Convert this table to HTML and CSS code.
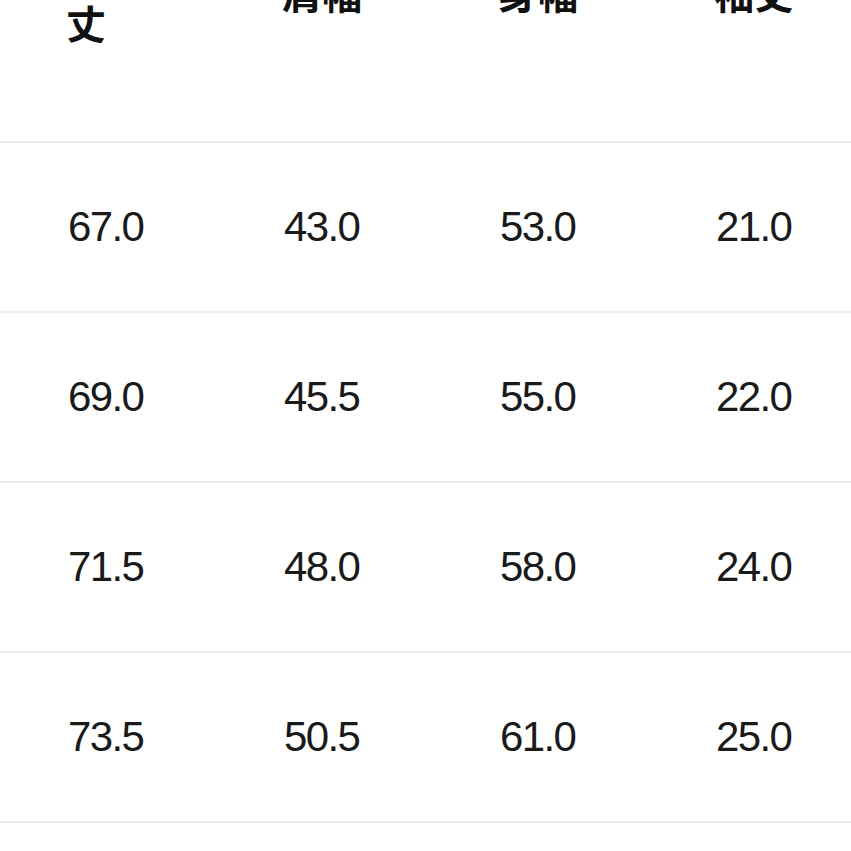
FILE: index.html
```html
<!DOCTYPE html>
<html lang="ja">
<head>
<meta charset="utf-8">
<link rel="stylesheet" href="styles.css">
</head>
<body>
<div class="sheet">
  <div class="row head">
    <div class="cell">着<br>丈</div>
    <div class="cell">肩幅</div>
    <div class="cell">身幅</div>
    <div class="cell">袖丈</div>
  </div>
  <div class="row">
    <div class="cell"><span class="num">67.0</span></div>
    <div class="cell"><span class="num">43.0</span></div>
    <div class="cell"><span class="num">53.0</span></div>
    <div class="cell"><span class="num">21.0</span></div>
  </div>
  <div class="row">
    <div class="cell"><span class="num">69.0</span></div>
    <div class="cell"><span class="num">45.5</span></div>
    <div class="cell"><span class="num">55.0</span></div>
    <div class="cell"><span class="num">22.0</span></div>
  </div>
  <div class="row">
    <div class="cell"><span class="num">71.5</span></div>
    <div class="cell"><span class="num">48.0</span></div>
    <div class="cell"><span class="num">58.0</span></div>
    <div class="cell"><span class="num">24.0</span></div>
  </div>
  <div class="row">
    <div class="cell"><span class="num">73.5</span></div>
    <div class="cell"><span class="num">50.5</span></div>
    <div class="cell"><span class="num">61.0</span></div>
    <div class="cell"><span class="num">25.0</span></div>
  </div>
  <div class="row">
    <div class="cell"></div>
    <div class="cell"></div>
    <div class="cell"></div>
    <div class="cell"></div>
  </div>
</div>
</body>
</html>
```
FILE: styles.css
```css
html, body {
  margin: 0;
  padding: 0;
  background: #ffffff;
  overflow: hidden;
}
body {
  width: 851px;
  height: 851px;
}
.sheet {
  width: 864px;
  margin-top: -92px;
}
.row {
  display: grid;
  grid-template-columns: repeat(4, 216px);
  align-items: center;
  height: 168px;
  border-bottom: 2px solid #ececec;
}
.row.head {
  height: auto;
  padding: 24px 0 89px;
}
.cell {
  padding-left: 68px;
  color: #1a1a1a;
  white-space: nowrap;
}
.head .cell {
  padding-left: 66px;
  font-family: "Noto Sans CJK JP", "Noto Sans", sans-serif;
  font-weight: 700;
  font-size: 40px;
  line-height: 60px;
  color: #111111;
}
.num {
  display: inline-block;
  font-family: "Liberation Sans", Arial, sans-serif;
  font-size: 42px;
  line-height: 50px;
  letter-spacing: -1.6px;
}
```
